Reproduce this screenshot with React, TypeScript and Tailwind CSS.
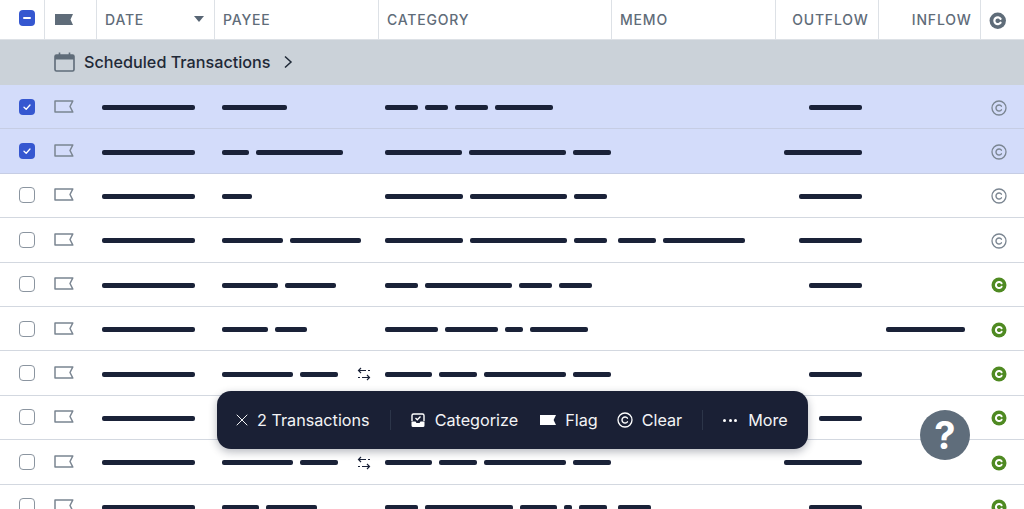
import { X } from "lucide-react";

type Row = {
  selected?: boolean;
  payee: number[];
  transfer?: boolean;
  category: number[];
  memo?: number[];
  outflow?: number;
  inflow?: number;
  cleared?: boolean;
};

const rows: Row[] = [
  { selected: true, payee: [65], category: [33, 23, 33, 58], outflow: 53 },
  { selected: true, payee: [27, 87], category: [78, 97, 38], outflow: 78 },
  { payee: [30], category: [78, 97, 33], outflow: 63 },
  { payee: [61, 71], category: [78, 97, 33], memo: [38, 82], outflow: 63 },
  { payee: [56, 51], category: [33, 87, 33, 33], outflow: 53, cleared: true },
  { payee: [46, 32], category: [53, 53, 18, 58], inflow: 79, cleared: true },
  { payee: [71, 38], transfer: true, category: [48, 38, 82, 38], outflow: 53, cleared: true },
  { payee: [71, 38], category: [48, 38, 55, 38], outflow: 43, cleared: true },
  { payee: [71, 38], transfer: true, category: [48, 38, 82, 38], outflow: 78, cleared: true },
  { payee: [37, 51], category: [33, 88, 37, 8, 28], memo: [33], outflow: 53, cleared: true },
];

function Bars({ widths }: { widths: number[] }) {
  return (
    <div className="flex items-center gap-[7px]">
      {widths.map((w, i) => (
        <span key={i} className="block h-[5px] rounded-[2px] bg-[#1a2238]" style={{ width: w }} />
      ))}
    </div>
  );
}

function FlagIcon({ className }: { className?: string }) {
  return (
    <svg width="20" height="14" viewBox="0 0 20 14" className={className}>
      <path
        d="M1 1.500H18.800L16 7l2.800 5.500H1Z"
        fill="none"
        stroke="currentColor"
        strokeWidth="1.500"
        strokeLinejoin="round"
      />
    </svg>
  );
}

function ClearedIcon({ className }: { className?: string }) {
  return (
    <svg width="16" height="16" viewBox="0 0 16 16" fill="none" className={className}>
      <circle cx="8" cy="8" r="7" stroke="currentColor" strokeWidth="1.300" />
      <path d="M10.400 6.200a3 3 0 1 0 0 3.600" stroke="currentColor" strokeWidth="1.400" strokeLinecap="round" />
    </svg>
  );
}

function SolidCleared({ size = 16, className }: { size?: number; className?: string }) {
  return (
    <svg width={size} height={size} viewBox="0 0 16 16" fill="none" className={className}>
      <circle cx="8" cy="8" r="7.500" fill="currentColor" />
      <path d="M10.600 6.300a3.100 3.100 0 1 0 0 3.400" stroke="#fff" strokeWidth="2" strokeLinecap="round" />
    </svg>
  );
}

function TransferIcon() {
  return (
    <svg width="14" height="16" viewBox="0 0 14 16" fill="none" className="text-[#1a2238]">
      <path d="M13 4.500H11M9 4.500H1.500M4 2l-2.500 2.500L4 7" stroke="currentColor" strokeWidth="1.200" />
      <path d="M1 11.500h2M5 11.500h7.500M10 9l2.500 2.500L10 14" stroke="currentColor" strokeWidth="1.200" />
    </svg>
  );
}

function Checkbox({ checked }: { checked?: boolean }) {
  if (checked) {
    return (
      <span className="flex h-4 w-4 items-center justify-center rounded-[4px] bg-[#3557d0]">
        <svg width="10" height="10" viewBox="0 0 10 10" fill="none">
          <path d="M2 5.200l2.200 2.100L8 3" stroke="#fff" strokeWidth="1.300" strokeLinecap="round" strokeLinejoin="round" />
        </svg>
      </span>
    );
  }
  return <span className="block h-4 w-4 rounded-[4px] border-[1.5px] border-[#8b95a0] bg-white" />;
}

function HeaderRow() {
  const cell = "flex h-full items-center border-r-[1.5px] border-[#dde1e6]";
  return (
    <div className="flex h-[39.5px] shrink-0 border-b border-[#dde1e6] bg-white text-[14px] font-medium tracking-[0.8px] text-[#5f6c79]">
      <div className={cell + " w-[44.5px] pl-[19px]"}>
        <span className="flex h-4 w-4 -translate-y-px items-center justify-center rounded-[4px] bg-[#3557d0]">
          <span className="block h-[2px] w-2 rounded-full bg-white" />
        </span>
      </div>
      <div className={cell + " w-[52px] pl-[10px]"}>
        <svg width="18" height="11" viewBox="0 0 18 11" className="text-[#5f6c79]">
          <path d="M0 0H18L15.500 5.500L18 11H0Z" fill="currentColor" />
        </svg>
      </div>
      <div className={cell + " w-[118px] justify-between pl-[8.5px] pr-[9.5px]"}>
        <span>DATE</span>
        <span className="h-0 w-0 border-x-[5px] border-t-[6px] border-x-transparent border-t-[#586574]" />
      </div>
      <div className={cell + " w-[164px] pl-[8.5px]"}>PAYEE</div>
      <div className={cell + " w-[233px] pl-[8.5px]"}>CATEGORY</div>
      <div className={cell + " w-[164px] pl-[8.5px]"}>MEMO</div>
      <div className={cell + " w-[103px] justify-end pr-[9px]"}>OUTFLOW</div>
      <div className={cell + " w-[102px] justify-end pr-[8px]"}>INFLOW</div>
      <div className="flex flex-1 items-center pl-[8px] pt-[3px]">
        <SolidCleared size={17.500} className="text-[#5f6c79]" />
      </div>
    </div>
  );
}

function TransactionRow({ row }: { row: Row }) {
  return (
    <div
      className={
        "flex h-[44.4px] shrink-0 items-center border-b pt-[2px] " +
        (row.selected ? "border-[#c6cde4] bg-[#d3dcfa]" : "border-[#d3d8e0] bg-white")
      }
    >
      <div className="w-[44px] -translate-y-px pl-[19px]">
        <Checkbox checked={row.selected} />
      </div>
      <div className="w-[52px] -translate-y-[1.5px] pl-[10px] text-[#7a8591]">
        <FlagIcon />
      </div>
      <div className="w-[118px] pl-[6px]">
        <Bars widths={[93]} />
      </div>
      <div className="flex w-[164px] items-center justify-between pl-[8px] pr-[7px]">
        <Bars widths={row.payee} />
        {row.transfer && <TransferIcon />}
      </div>
      <div className="w-[233px] pl-[6.5px]">
        <Bars widths={row.category} />
      </div>
      <div className="w-[164px] pl-[7px]">{row.memo && <Bars widths={row.memo} />}</div>
      <div className="flex w-[103px] justify-end pr-[16px]">{row.outflow && <Bars widths={[row.outflow]} />}</div>
      <div className="flex w-[102px] justify-end pr-[15px]">{row.inflow && <Bars widths={[row.inflow]} />}</div>
      <div className="flex-1 pl-[10.5px]">
        {row.cleared ? <SolidCleared className="text-[#4f8a22]" /> : <ClearedIcon className="text-[#7a8591]" />}
      </div>
    </div>
  );
}

function Toolbar() {
  return (
    <div className="absolute left-[217px] top-[391px] flex h-[58px] w-[591px] items-center rounded-[14px] bg-[#1a2035] pl-[14.5px] text-[16.2px] text-[#f3f4f6] shadow-[0_3px_8px_rgba(15,23,42,0.3)]">
      <X size={20} strokeWidth={1.2} />
      <span className="ml-[5.5px]">2 Transactions</span>
      <span className="ml-[20px] h-[20px] w-px bg-[#2c3549]" />
      <svg width="14" height="15" viewBox="0 0 14 15" fill="none" className="ml-[20px]">
        <path d="M1 8V2.500A1.500 1.500 0 0 1 2.500 1h9A1.500 1.500 0 0 1 13 2.500V8" stroke="#fff" strokeWidth="1.400" />
        <path d="M0.500 8.500H4.500L5.500 10H8.500L9.500 8.500H13.500V12.500a1.500 1.500 0 0 1-1.500 1.500H2a1.500 1.500 0 0 1-1.500-1.500Z" fill="#fff" />
        <path d="M4.500 5l1.800 1.800L9.500 3.500" stroke="#fff" strokeWidth="1.300" />
      </svg>
      <span className="ml-[10px]">Categorize</span>
      <svg width="16" height="12" viewBox="0 0 16 12" className="ml-[22px]">
        <path d="M0 1H16L13.600 6L16 11H0Z" fill="#fff" />
      </svg>
      <span className="ml-[9px]">Flag</span>
      <ClearedIcon className="ml-[19px] text-white" />
      <span className="ml-[9px]">Clear</span>
      <span className="ml-[20px] h-[20px] w-px bg-[#2c3549]" />
      <span className="ml-[20px] flex w-[14px] justify-between">
        <span className="h-[3px] w-[3px] rounded-full bg-white" />
        <span className="h-[3px] w-[3px] rounded-full bg-white" />
        <span className="h-[3px] w-[3px] rounded-full bg-white" />
      </span>
      <span className="ml-[11px]">More</span>
    </div>
  );
}

export default function App() {
  return (
    <div className="relative flex h-[509px] w-[1024px] flex-col overflow-hidden bg-white font-['Inter','Liberation_Sans',sans-serif]">
      <HeaderRow />
      <div className="flex h-[45.5px] shrink-0 items-center bg-[#cbd2d9] pl-[54px] text-[#1f2937]">
        <svg width="21" height="20" viewBox="0 0 21 20" fill="none" className="text-[#5f6c79]">
          <rect x="1" y="3" width="19" height="16" rx="1.500" stroke="currentColor" strokeWidth="1.600" />
          <path d="M1 4.500a1.500 1.500 0 0 1 1.500-1.500h16a1.500 1.500 0 0 1 1.500 1.500V7.500H1Z" fill="currentColor" />
          <path d="M5.500 0.500V4M15.500 0.500V4" stroke="currentColor" strokeWidth="1.600" />
        </svg>
        <span className="ml-[9px] text-[16.2px] font-medium">Scheduled Transactions</span>
        <svg width="10" height="14" viewBox="0 0 10 14" fill="none" className="ml-[12px]">
          <path d="M2 1.500L8 7L2 12.500" stroke="#1f2937" strokeWidth="1.500" />
        </svg>
      </div>
      {rows.map((row, i) => (
        <TransactionRow key={i} row={row} />
      ))}
      <Toolbar />
      <div className="absolute left-[920px] top-[410px] flex h-[50px] w-[50px] items-center justify-center rounded-full bg-[#5f6d7b] text-[38px] font-bold text-white">
        ?
      </div>
    </div>
  );
}
